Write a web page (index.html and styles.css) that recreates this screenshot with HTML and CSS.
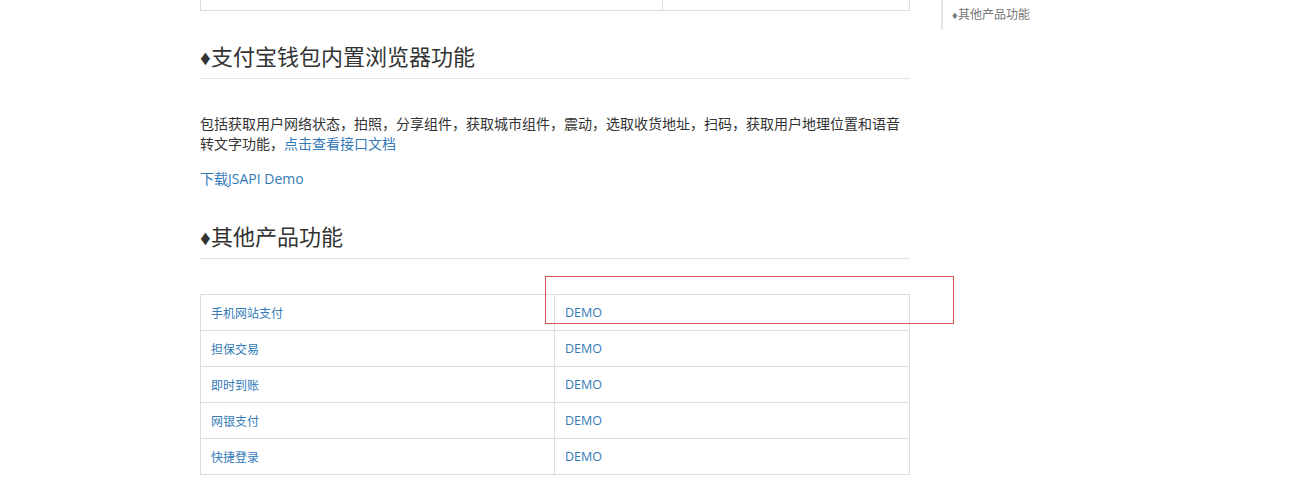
FILE: index.html
```html
<!DOCTYPE html>
<html lang="zh-CN">
<head>
<meta charset="utf-8">
<title>其他产品功能</title>
<link rel="stylesheet" href="styles.css">
</head>
<body>
<div class="page">
  <main class="content">
    <div class="table-tail">
      <div class="cell"></div>
      <div class="cell"></div>
    </div>

    <h3 class="section-title"><span class="mark">♦</span>支付宝钱包内置浏览器功能</h3>
    <p class="desc">包括获取用户网络状态，拍照，分享组件，获取城市组件，震动，选取收货地址，扫码，获取用户地理位置和语音转文字功能，<a href="#">点击查看接口文档</a></p>
    <p class="download"><a href="#">下载JSAPI Demo</a></p>

    <h3 class="section-title second"><span class="mark">♦</span>其他产品功能</h3>
    <div class="table-wrap">
      <table class="products">
        <tbody>
          <tr><td><a href="#">手机网站支付</a></td><td><a href="#">DEMO</a></td></tr>
          <tr><td><a href="#">担保交易</a></td><td><a href="#">DEMO</a></td></tr>
          <tr><td><a href="#">即时到账</a></td><td><a href="#">DEMO</a></td></tr>
          <tr><td><a href="#">网银支付</a></td><td><a href="#">DEMO</a></td></tr>
          <tr><td><a href="#">快捷登录</a></td><td><a href="#">DEMO</a></td></tr>
        </tbody>
      </table>
      <div class="highlight"></div>
    </div>
  </main>
  <aside class="sidebar">
    <ul class="side-nav">
      <li><a href="#"><span class="mark-sm">♦</span>其他产品功能</a></li>
    </ul>
  </aside>
</div>
</body>
</html>
```

FILE: styles.css
```css
html, body {
  margin: 0;
  padding: 0;
  background: #fff;
}
body {
  font-family: "Open Sans", "Noto Sans CJK SC", sans-serif;
  font-size: 14px;
  line-height: 20px;
  color: #333;
  overflow: hidden;
}
a {
  color: #337ab7;
  text-decoration: none;
}
.page {
  display: flex;
  align-items: flex-start;
  padding-left: 200px;
}
.content {
  width: 710px;
  flex: none;
}
.table-tail {
  display: grid;
  grid-template-columns: 461px 1fr;
  height: 10px;
  border: 1px solid #ddd;
  border-top: none;
}
.table-tail .cell + .cell {
  border-left: 1px solid #ddd;
}
.section-title {
  font-family: "Noto Sans CJK SC", sans-serif;
  font-size: 22px;
  font-weight: normal;
  line-height: 24px;
  color: #333;
  margin: 32px 0 34px;
  padding-bottom: 11px;
  border-bottom: 1px solid #e2e2e2;
}
.section-title .mark {
  font-family: "Liberation Sans", sans-serif;
  font-size: 21px;
  line-height: 0;
  display: inline-block;
  width: 11px;
  vertical-align: 0;
}
.section-title.second {
  margin-top: 34px;
  margin-bottom: 35px;
}
.desc {
  margin: 0 0 16px;
  font-family: "Noto Sans CJK SC", sans-serif;
}
.download {
  margin: 0;
}
.table-wrap {
  position: relative;
}
.products {
  width: 100%;
  border-collapse: collapse;
  table-layout: fixed;
  font-size: 12px;
}
.products tr {
  height: 36px;
}
.products td {
  border: 1px solid #ddd;
  padding: 0 10px;
  vertical-align: middle;
  line-height: 16px;
}
.products td:first-child {
  width: 333px;
  font-family: "Noto Sans CJK SC", sans-serif;
}
.products td:last-child a {
  font-size: 12.5px;
}
.highlight {
  position: absolute;
  left: 345px;
  top: -18px;
  width: 409px;
  height: 48px;
  box-sizing: border-box;
  border: 1px solid #d9534f;
}
.sidebar {
  margin-left: 31px;
  flex: none;
}
.side-nav {
  list-style: none;
  margin: 0;
  padding: 0;
  border-left: 2px solid #e5e5e5;
}
.side-nav li {
  padding: 6px 0 8px 9px;
  font-family: "Noto Sans CJK SC", sans-serif;
  font-size: 12px;
  line-height: 16px;
}
.side-nav .mark-sm {
  font-family: "Liberation Sans", sans-serif;
  font-size: 11px;
  line-height: 0;
  display: inline-block;
  width: 6px;
}
.side-nav a {
  color: #767676;
}
```
